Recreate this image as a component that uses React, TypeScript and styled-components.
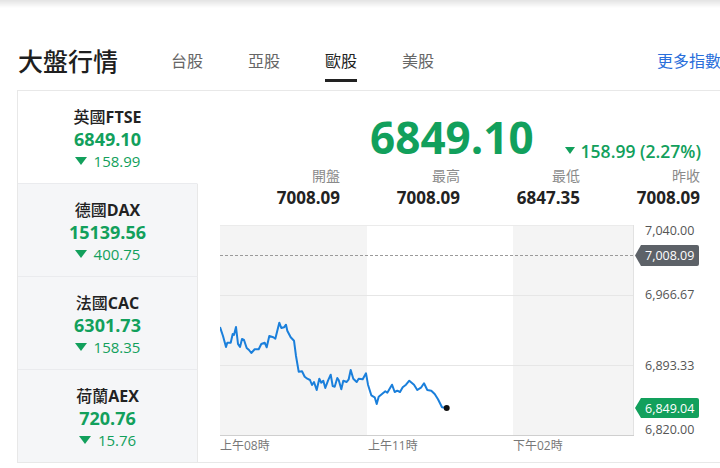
import React from "react";
import styled, { createGlobalStyle } from "styled-components";

const GREEN = "#12a05c";
const FONT = `"Open Sans", "Noto Sans CJK TC", sans-serif`;

const Global = createGlobalStyle`
  html, body { margin: 0; padding: 0; background: #fff; overflow: hidden; }
  body { font-family: ${FONT}; color: #222; }
`;

const Shade = styled.div`
  height: 8px;
  background: linear-gradient(to bottom, rgba(0, 0, 0, 0.11), rgba(0, 0, 0, 0));
`;

const Page = styled.div`
  width: 740px;
  box-sizing: border-box;
  padding: 0 17px;
`;

const Header = styled.div`
  height: 82px;
  box-sizing: border-box;
  padding-top: 38px;
  display: flex;
  align-items: flex-start;
`;

const Title = styled.h1`
  margin: 0 55px 0 1px;
  font-size: 25px;
  line-height: 30px;
  font-weight: 500;
  color: #1f1f1f;
`;

const Tabs = styled.nav`
  display: flex;
  gap: 45px;
  margin-left: -2px;
`;

const Tab = styled.div<{ $active?: boolean }>`
  font-size: 16px;
  line-height: 30px;
  padding-bottom: 3px;
  border-bottom: 3px solid ${(p) => (p.$active ? "#222" : "transparent")};
  color: ${(p) => (p.$active ? "#222" : "#666")};
`;

const More = styled.a`
  margin-left: auto;
  margin-right: 2px;
  font-size: 16px;
  line-height: 30px;
  color: #2a6fdb;
  text-decoration: none;
`;

const Card = styled.div`
  display: flex;
  border: 1px solid #e8e8e8;
  border-right: none;
`;

const Sidebar = styled.div`
  width: 180px;
  display: flex;
  flex-direction: column;
`;

const Item = styled.div<{ $active?: boolean; $last?: boolean }>`
  padding: 15px 0 0;
  height: 77px;
  text-align: center;
  background: ${(p) => (p.$active ? "#fff" : "#f5f6f8")};
  border-right: 1px solid ${(p) => (p.$active ? "#fff" : "#e8e8e8")};
  border-bottom: ${(p) => (p.$last ? "none" : "1px solid #eaebee")};
`;

const Name = styled.div`
  font-size: 16px;
  line-height: 22px;
  font-weight: 700;
  color: #222;
`;

const Cn = styled.span`
  font-weight: 500;
`;

const Value = styled.div`
  font-size: 18px;
  line-height: 23px;
  font-weight: 700;
  color: ${GREEN};
`;

const Change = styled.div`
  font-size: 15px;
  line-height: 20px;
  color: ${GREEN};
  display: flex;
  align-items: center;
  justify-content: center;
  gap: 7px;
`;

const Tri = styled.span<{ $w: number; $h: number }>`
  display: inline-block;
  width: 0;
  height: 0;
  border-left: ${(p) => p.$w / 2}px solid transparent;
  border-right: ${(p) => p.$w / 2}px solid transparent;
  border-top: ${(p) => p.$h}px solid ${GREEN};
`;

const Main = styled.div`
  flex: 1;
  padding: 0 22px;
  display: flex;
  flex-direction: column;
`;

const TopRow = styled.div`
  margin-top: 20px;
  display: flex;
  justify-content: flex-end;
  align-items: baseline;
  gap: 31px;
`;

const Big = styled.div`
  font-size: 44px;
  line-height: 52px;
  font-weight: 700;
  color: ${GREEN};
`;

const BigChange = styled.div`
  font-size: 17.5px;
  font-weight: 600;
  color: ${GREEN};
  display: flex;
  align-items: center;
  gap: 6px;
`;

const Stats = styled.div`
  margin-top: 2px;
  display: grid;
  grid-template-columns: repeat(4, 120px);
  text-align: right;
`;

const StatLabel = styled.div`
  font-size: 14px;
  line-height: 22px;
  color: #8a8a8a;
`;

const StatValue = styled.div`
  font-size: 17px;
  line-height: 22px;
  font-weight: 700;
  color: #222;
`;

const ChartSvg = styled.svg`
  display: block;
  margin-top: 13px;
  font-family: ${FONT};
`;

const items = [
  { cn: "英國", en: "FTSE", v: "6849.10", c: "158.99" },
  { cn: "德國", en: "DAX", v: "15139.56", c: "400.75" },
  { cn: "法國", en: "CAC", v: "6301.73", c: "158.35" },
  { cn: "荷蘭", en: "AEX", v: "720.76", c: "15.76" },
];

const stats = [
  ["開盤", "7008.09"],
  ["最高", "7008.09"],
  ["最低", "6847.35"],
  ["昨收", "7008.09"],
];

const line =
  "220,327 223,336 226,347 227.3,342.7 230.7,342.7 232.7,334 234,335 236,327 238,344 240,347 242,339 244,340 246.7,348 249,350 251.3,353 254.7,349.3 258.7,349.3 261.3,344 264.7,342.7 266.7,347.3 269.3,336 273.3,337.3 275.3,338.7 279.3,322.7 281.3,328 284,327.3 286,324.7 287.3,330.7 290.7,337.3 294,340.7 296,356 298.7,371.7 302,371.3 304.7,376.7 307.3,378.7 310,380 312,385 314,382 316.7,390 319.3,378.7 321.3,382.7 323.3,380.7 325.3,388 328,380.7 330.7,374.7 332.7,386 334.7,386.7 337.3,378 338.7,380 341.3,389.3 343.3,380.7 346.7,382 348.7,379.3 350.7,370 353.3,378.7 356.7,382 358.7,378.7 362.7,379.3 366,373.3 368,384.7 371.3,395.3 374.7,397.3 376.7,404 378.7,396.7 382,394 385.3,391.3 387.3,392.7 392,384.7 394.7,392 397.3,390.7 400,392 402.7,387.3 406,384.7 409.3,380.7 414,384.7 417.3,390 421.3,387.3 424,383.3 427.3,390 431.3,390.7 434.7,394 438,399.3 442,407.3 446.7,408";

function Chart() {
  return (
    <ChartSvg width={480} height={239} viewBox="220 222 480 239">
      <rect x={220} y={225} width={147} height={210} fill="#f4f4f4" />
      <rect x={513} y={225} width={121} height={210} fill="#f4f4f4" />
      <line x1={220} x2={634} y1={225.5} y2={225.5} stroke="#ebebeb" />
      <line x1={220} x2={634} y1={295.5} y2={295.5} stroke="#e6e6e6" />
      <line x1={220} x2={634} y1={365.5} y2={365.5} stroke="#e6e6e6" />
      <line x1={633.5} x2={633.5} y1={225} y2={435} stroke="#e2e2e2" />
      <line x1={220} x2={634} y1={435.5} y2={435.5} stroke="#cfcfcf" />
      <line x1={220} x2={634} y1={255.5} y2={255.5} stroke="#9a9a9a" strokeDasharray="3 2" />
      <polyline points={line} fill="none" stroke="#1a7fdb" strokeWidth={2} strokeLinejoin="round" />
      <circle cx={446.7} cy={408} r={3} fill="#111" />
      <g fontSize={12.5} fill="#555" dominantBaseline="central">
        <text x={645} y={230}>7,040.00</text>
        <text x={645} y={294.5}>6,966.67</text>
        <text x={645} y={365}>6,893.33</text>
        <text x={645} y={429}>6,820.00</text>
      </g>
      <path d="M635,255.5 L641,245 H697 Q699,245 699,247 V264 Q699,266 697,266 H641 Z" fill="#5d6268" />
      <text x={645} y={255.5} fontSize={12.5} fill="#fff" dominantBaseline="central">7,008.09</text>
      <path d="M635,408 L641,398 H697 Q699,398 699,400 V416 Q699,418 697,418 H641 Z" fill={GREEN} />
      <text x={645} y={408} fontSize={12.5} fill="#fff" dominantBaseline="central">6,849.04</text>
      <g fontSize={12} fill="#777" dominantBaseline="central">
        <text x={220} y={445}>上午08時</text>
        <text x={368} y={445}>上午11時</text>
        <text x={513} y={445}>下午02時</text>
      </g>
    </ChartSvg>
  );
}

export default function App() {
  return (
    <>
      <Global />
      <Shade />
      <Page>
        <Header>
          <Title>大盤行情</Title>
          <Tabs>
            <Tab>台股</Tab>
            <Tab>亞股</Tab>
            <Tab $active>歐股</Tab>
            <Tab>美股</Tab>
          </Tabs>
          <More href="#">更多指數</More>
        </Header>
        <Card>
          <Sidebar>
            {items.map((it, i) => (
              <Item key={it.en} $active={i === 0} $last={i === items.length - 1}>
                <Name>
                  <Cn>{it.cn}</Cn>
                  {it.en}
                </Name>
                <Value>{it.v}</Value>
                <Change>
                  <Tri $w={12} $h={8} />
                  {it.c}
                </Change>
              </Item>
            ))}
          </Sidebar>
          <Main>
            <TopRow>
              <Big>6849.10</Big>
              <BigChange>
                <Tri $w={10} $h={7} />
                158.99 (2.27%)
              </BigChange>
            </TopRow>
            <Stats>
              {stats.map(([l]) => (
                <StatLabel key={l}>{l}</StatLabel>
              ))}
              {stats.map(([l, v]) => (
                <StatValue key={l + "v"}>{v}</StatValue>
              ))}
            </Stats>
            <Chart />
          </Main>
        </Card>
      </Page>
    </>
  );
}
